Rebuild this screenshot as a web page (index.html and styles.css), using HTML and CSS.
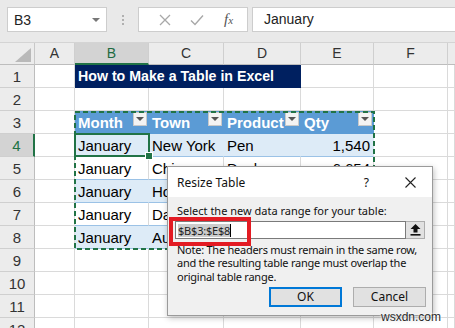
FILE: index.html
```html
<!DOCTYPE html>
<html>
<head>
<meta charset="utf-8">
<link rel="stylesheet" href="styles.css">
</head>
<body>
<div class="toolbar">
  <div class="namebox"><span>B3</span><span class="nb-arrow"></span></div>
  <div class="dots"><i></i><i></i><i></i></div>
  <div class="fgroup">
    <svg class="ico" width="12" height="12" viewBox="0 0 12 12"><path d="M1 1 L11 11 M11 1 L1 11" stroke="#a8a8a8" stroke-width="1.3" fill="none"/></svg>
    <svg class="ico" width="14" height="12" viewBox="0 0 14 12"><path d="M1 6.5 L5 10.5 L13 1.5" stroke="#a8a8a8" stroke-width="1.4" fill="none"/></svg>
    <span class="fx">f<small>x</small></span>
  </div>
  <div class="finput">January</div>
</div>

<div class="sheet">
  <div class="corner"><span class="tri"></span></div>
  <div class="ch">A</div><div class="ch sel">B</div><div class="ch">C</div><div class="ch">D</div><div class="ch">E</div><div class="ch">F</div><div class="ch last"></div>

  <div class="rh">1</div><div class="c"></div><div class="c title">How to Make a Table in Excel</div><div class="c"></div><div class="c"></div><div class="c"></div>

  <div class="rh">2</div><div class="c"></div><div class="c"></div><div class="c"></div><div class="c"></div><div class="c"></div><div class="c"></div><div class="c"></div>

  <div class="rh">3</div><div class="c"></div>
  <div class="c th"><span>Month</span><span class="dd"></span></div>
  <div class="c th"><span>Town</span><span class="dd"></span></div>
  <div class="c th"><span>Product</span><span class="dd"></span></div>
  <div class="c th"><span>Qty</span><span class="dd"></span></div>
  <div class="c"></div><div class="c"></div>

  <div class="rh sel">4</div><div class="c"></div>
  <div class="c t b">January</div><div class="c t b">New York</div><div class="c t b">Pen</div><div class="c t b num">1,540</div>
  <div class="c"></div><div class="c"></div>

  <div class="rh">5</div><div class="c"></div>
  <div class="c t">January</div><div class="c t">Chicago</div><div class="c t">Desk</div><div class="c t num">6,654</div>
  <div class="c"></div><div class="c"></div>

  <div class="rh">6</div><div class="c"></div>
  <div class="c t b">January</div><div class="c t b">Houston</div><div class="c t b">Pen</div><div class="c t b num">2,120</div>
  <div class="c"></div><div class="c"></div>

  <div class="rh">7</div><div class="c"></div>
  <div class="c t">January</div><div class="c t">Dallas</div><div class="c t">Pencil</div><div class="c t num">3,410</div>
  <div class="c"></div><div class="c"></div>

  <div class="rh">8</div><div class="c"></div>
  <div class="c t b">January</div><div class="c t b">Austin</div><div class="c t b">Desk</div><div class="c t b num">980</div>
  <div class="c"></div><div class="c"></div>

  <div class="rh">9</div><div class="c"></div><div class="c"></div><div class="c"></div><div class="c"></div><div class="c"></div><div class="c"></div><div class="c"></div>
  <div class="rh">10</div><div class="c"></div><div class="c"></div><div class="c"></div><div class="c"></div><div class="c"></div><div class="c"></div><div class="c"></div>
  <div class="rh">11</div><div class="c"></div><div class="c"></div><div class="c"></div><div class="c"></div><div class="c"></div><div class="c"></div><div class="c"></div>
  <div class="rh">12</div><div class="c"></div><div class="c"></div><div class="c"></div><div class="c"></div><div class="c"></div><div class="c"></div><div class="c"></div>

  <svg class="ants" width="301" height="139" viewBox="0 0 301 139"><rect x="1" y="1" width="299" height="137" fill="none" stroke="#217346" stroke-width="2" stroke-dasharray="5 3"/></svg>
  <div class="active"><span class="handle"></span></div>
</div>

<div class="dialog">
  <div class="dlg-title">
    <span class="dlg-name">Resize Table</span>
    <span class="help">?</span>
    <svg class="close" width="11" height="11" viewBox="0 0 11 11"><path d="M0.5 0.5 L10.5 10.5 M10.5 0.5 L0.5 10.5" stroke="#222" stroke-width="1.1" fill="none"/></svg>
  </div>
  <div class="dlg-body">
    <div class="label"><u>S</u>elect the new data range for your table:</div>
    <div class="range-row">
      <div class="range-input"><span class="selected">$B$3:$E$8</span><span class="caret"></span></div>
      <div class="refbtn"><svg width="11" height="12" viewBox="0 0 11 12"><path d="M5.5 0 L10.5 5 L7.5 5 L7.5 8.5 L3.5 8.5 L3.5 5 L0.5 5 Z" fill="#111"/><rect x="0.5" y="10" width="10" height="1.6" fill="#111"/></svg></div>
    </div>
    <p class="note">Note: The headers must remain in the same row,<br>and the resulting table range must overlap the<br>original table range.</p>
    <div class="buttons">
      <div class="btn ok">OK</div>
      <div class="btn">Cancel</div>
    </div>
  </div>
  <div class="redbox"></div>
</div>

<div class="watermark">wsxdn.com</div>
</body>
</html>
```

FILE: styles.css
```css
body {
  margin: 0;
  width: 455px;
  height: 328px;
  overflow: hidden;
  position: relative;
  background: #fff;
  font-family: "Liberation Sans", Arial, sans-serif;
}

.toolbar {
  height: 43px;
  box-sizing: border-box;
  background: #e9e9e9;
  display: flex;
  align-items: flex-start;
  padding: 7px 0 0 7px;
  border-bottom: 1px solid #d4d4d4;
}

.namebox {
  width: 100px;
  height: 25px;
  box-sizing: border-box;
  background: #fff;
  border: 1px solid #cdcdcd;
  display: flex;
  align-items: center;
  justify-content: space-between;
  padding: 0 6px 0 6px;
  font-size: 14px;
  color: #222;
}

.nb-arrow {
  width: 0;
  height: 0;
  border-left: 4px solid transparent;
  border-right: 4px solid transparent;
  border-top: 4px solid #777;
}

.dots {
  width: 31px;
  display: flex;
  flex-direction: column;
  align-items: center;
  gap: 2px;
  padding-top: 8px;
}

.dots i {
  display: block;
  width: 2px;
  height: 2px;
  background: #b0b0b0;
}

.fgroup {
  width: 110px;
  height: 25px;
  box-sizing: border-box;
  background: #fff;
  border: 1px solid #cdcdcd;
  display: flex;
  align-items: center;
  justify-content: space-around;
  padding: 0 4px 0 10px;
}

.fx {
  font-family: "Liberation Serif", serif;
  font-style: italic;
  font-size: 15px;
  color: #555;
}

.fx small {
  font-size: 11px;
}

.finput {
  margin-left: 4px;
  flex: 1;
  height: 25px;
  box-sizing: border-box;
  background: #fff;
  border: 1px solid #cdcdcd;
  border-right: none;
  padding-left: 11px;
  font-size: 14px;
  line-height: 23px;
  color: #222;
}

.sheet {
  display: grid;
  grid-template-columns: 35px 40px 74px 75px 77px 73px 74px 1fr;
  grid-template-rows: 22px repeat(12, 23px);
  position: relative;
  height: 285px;
  overflow: hidden;
}

.corner {
  background: #ececec;
  border-right: 1px solid #c8c8c8;
  border-bottom: 1px solid #bdbdbd;
  display: flex;
  justify-content: flex-end;
  align-items: flex-end;
  padding: 0 3px 2px 0;
}

.tri {
  width: 16px;
  height: 14px;
  background: #b9b9b9;
  clip-path: polygon(100% 0, 100% 100%, 0 100%);
}

.ch {
  background: #ececec;
  text-align: center;
  font-size: 14px;
  line-height: 21px;
  color: #333;
  border-right: 1px solid #cfcfcf;
  border-bottom: 1px solid #bdbdbd;
}

.ch.sel {
  background: #d3d3d3;
  color: #1e6b41;
  border-bottom: 2px solid #217346;
}

.ch.last {
  border-right: none;
}

.rh {
  background: #ececec;
  text-align: center;
  font-size: 15px;
  line-height: 23px;
  color: #333;
  border-right: 1px solid #bdbdbd;
  border-bottom: 1px solid #cfcfcf;
}

.rh.sel {
  background: #d3d3d3;
  color: #217346;
  border-right: 2px solid #217346;
}

.c {
  border-right: 1px solid #dadada;
  border-bottom: 1px solid #dadada;
  font-size: 15px;
  line-height: 23px;
  padding: 0 3px;
  white-space: nowrap;
  overflow: hidden;
  color: #000;
}

.title {
  grid-column: 3 / 6;
  background: #002060;
  color: #fff;
  font-weight: bold;
  font-size: 14.2px;
  border-right-color: #002060;
  border-bottom-color: #002060;
  overflow: visible;
}

.th {
  background: #5b9bd5;
  color: #fff;
  font-weight: bold;
  border-right-color: #5b9bd5;
  border-bottom-color: #5b9bd5;
  display: flex;
  justify-content: space-between;
  align-items: flex-start;
  padding-right: 1px;
}

.dd {
  margin-top: 1px;
  width: 14px;
  height: 14px;
  box-sizing: border-box;
  background: #f3f3f3;
  border: 1px solid #c9c9c9;
  display: flex;
  justify-content: center;
  align-items: center;
}

.dd::after {
  content: "";
  width: 0;
  height: 0;
  border-left: 4px solid transparent;
  border-right: 4px solid transparent;
  border-top: 4px solid #555;
}

.t {
  border-bottom-color: #9bc2e6;
}

.b {
  background: #ddebf7;
  border-right-color: #ddebf7;
}

.num {
  text-align: right;
}

.ants {
  position: absolute;
  left: 74px;
  top: 68px;
}

.active {
  position: absolute;
  left: 74px;
  top: 90px;
  width: 76px;
  height: 24px;
  box-sizing: border-box;
  border: 2px solid #217346;
}

.handle {
  position: absolute;
  right: -5px;
  bottom: -5px;
  width: 6px;
  height: 6px;
  background: #217346;
  border: 1px solid #fff;
}

.dialog {
  position: absolute;
  left: 167px;
  top: 166px;
  width: 266px;
  height: 150px;
  box-sizing: border-box;
  border: 1px solid #9a9a9a;
  background: #f0f0f0;
  box-shadow: 1px 2px 6px rgba(0, 0, 0, 0.25);
  font-family: "Noto Sans", "Liberation Sans", sans-serif;
  font-size: 11px;
  color: #111;
}

.dlg-title {
  height: 30px;
  background: #fff;
  display: flex;
  align-items: center;
  padding: 0 16px 0 9px;
}

.dlg-name {
  flex: 1;
  font-size: 12px;
}

.help {
  font-size: 12px;
  margin-right: 36px;
}

.dlg-body {
  padding: 6px 6px 0 7px;
}

.label {
  padding-left: 2px;
  line-height: 15px;
}

.label u {
  text-decoration-thickness: 1px;
  text-underline-offset: 2px;
}

.range-row {
  display: flex;
  margin-top: 3px;
  margin-right: 1px;
  height: 18px;
}

.range-input {
  flex: 1;
  background: #fff;
  border: 1px solid #7a7a7a;
  display: flex;
  align-items: center;
  padding-left: 2px;
}

.selected {
  background: #cccccc;
  color: #222;
  font-size: 11px;
  line-height: 13px;
  letter-spacing: -0.2px;
}

.caret {
  width: 1px;
  height: 13px;
  background: #000;
}

.refbtn {
  width: 18px;
  background: #e1e1e1;
  border: 1px solid #adadad;
  border-left: none;
  display: flex;
  justify-content: center;
  align-items: center;
}

.note {
  margin: 4px 0 0 2px;
  line-height: 13.3px;
  white-space: nowrap;
  letter-spacing: -0.25px;
}

.buttons {
  display: flex;
  justify-content: flex-end;
  gap: 11px;
  margin-top: 4px;
}

.btn {
  width: 73px;
  height: 20px;
  box-sizing: border-box;
  background: #e1e1e1;
  border: 1px solid #adadad;
  text-align: center;
  line-height: 18px;
  font-size: 12px;
}

.btn.ok {
  border: 2px solid #0078d7;
  line-height: 16px;
}

.redbox {
  position: absolute;
  left: 1px;
  top: 50px;
  width: 82px;
  height: 29px;
  box-sizing: border-box;
  border: 4px solid #e31b23;
}

.watermark {
  position: absolute;
  left: 381px;
  top: 310px;
  font-family: "Liberation Sans", Arial, sans-serif;
  font-size: 12px;
  color: #2a2a2a;
  text-shadow: 0 0 2px #fff, 0 0 2px #fff;
}
```
